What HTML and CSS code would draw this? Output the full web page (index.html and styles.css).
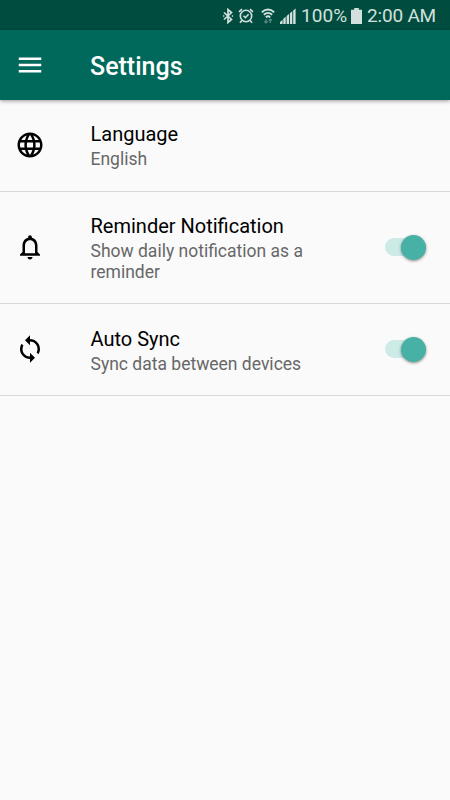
FILE: index.html
```html
<!DOCTYPE html>
<html lang="en">
<head>
    <meta charset="UTF-8">
    <meta name="viewport" content="width=device-width, initial-scale=1.0">
    <title>Settings</title>
    <link rel="stylesheet" href="styles.css">
</head>
<body>
    <!-- Status bar -->
    <div class="status-bar">
        <svg class="bluetooth" width="12" height="16" viewBox="0 0 12 16">
            <path d="M2 4.5l7.5 7L6 14.5V1.5l3.5 3L2 11.5M1 8h1.3M9.8 8h1.3" fill="none" stroke="currentColor" stroke-width="1.7"/>
        </svg>
        <svg class="alarm" width="16" height="16" viewBox="0 0 16 16">
            <g fill="none" stroke="currentColor" stroke-width="1.6">
                <circle cx="8" cy="8" r="5.7"/>
                <path d="M1 3.8L4 1.2M15 3.8L12 1.2M3.8 12.4L2 14.8M12.2 12.4L14 14.8M5.5 7.8l1.9 1.9 3.2-3.4"/>
            </g>
        </svg>
        <svg class="wifi" width="14" height="16" viewBox="0 0 14 16">
            <path d="M.8 4.2q6.2-5.4 12.4 0M2.8 6.7q4.2-3.6 8.4 0M4.8 9.2q2.2-1.8 4.4 0" fill="none" stroke="currentColor" stroke-width="1.8"/>
            <path d="M5 15v-4M3.3 13.3L5 15l1.7-1.7M9.3 11v4M7.6 12.7L9.3 11l1.7 1.7" fill="none" stroke="#5d8d84" stroke-width="1.2"/>
        </svg>
        <svg class="signal" width="16" height="16" viewBox="0 0 16 16">
            <path d="M0 16v-2l2.6-2.2V16zM3.3 16v-5.2l2.4-2v7.2zM6.6 16V8L9 6v10zM9.9 16V5.2l2.4-2V16zM13.2 16V2.4l2.4-2V16z" fill="currentColor"/>
        </svg>
        <span class="percent">100%</span>
        <svg class="battery" width="11" height="16" viewBox="0 0 11 16">
            <path d="M3.2 0h4.6v1.8H11V16H0V1.8h3.2z" fill="currentColor"/>
        </svg>
        <span class="time">2:00 AM</span>
    </div>

    <header>
        <svg class="icon" viewBox="0 0 24 24"><path d="M3 18h18v-2H3v2zm0-5h18v-2H3v2zm0-7v2h18V6H3z"/></svg>
        <h1>Settings</h1>
    </header>

    <!-- Settings list -->
    <main>
        <div class="setting">
            <svg class="icon" viewBox="0 0 24 24"><path d="M11.99 2C6.47 2 2 6.48 2 12s4.47 10 9.99 10C17.52 22 22 17.52 22 12S17.52 2 11.99 2zm6.93 6h-2.95c-.32-1.25-.78-2.45-1.38-3.56 1.84.63 3.37 1.91 4.33 3.56zM12 4.04c.83 1.2 1.48 2.53 1.91 3.96h-3.82c.43-1.43 1.08-2.76 1.91-3.96zM4.26 14C4.1 13.36 4 12.69 4 12s.1-1.36.26-2h3.38c-.08.66-.14 1.32-.14 2s.06 1.34.14 2H4.26zm.82 2h2.95c.32 1.25.78 2.45 1.38 3.56-1.84-.63-3.37-1.9-4.33-3.56zm2.95-8H5.08c.96-1.66 2.49-2.93 4.33-3.56C8.81 5.55 8.35 6.75 8.03 8zM12 19.96c-.83-1.2-1.48-2.53-1.91-3.96h3.82c-.43 1.43-1.08 2.76-1.91 3.96zM14.34 14H9.66c-.09-.66-.16-1.32-.16-2s.07-1.35.16-2h4.68c.09.65.16 1.32.16 2s-.07 1.34-.16 2zm.25 5.56c.6-1.11 1.06-2.31 1.38-3.56h2.95c-.96 1.65-2.49 2.93-4.33 3.56zM16.36 14c.08-.66.14-1.32.14-2s-.06-1.34-.14-2h3.38c.16.64.26 1.31.26 2s-.1 1.36-.26 2h-3.38z"/></svg>
            <div class="text">
                <h2>Language</h2>
                <p>English</p>
            </div>
        </div>
        <div class="setting">
            <svg class="icon" viewBox="0 0 24 24"><path d="M12 22c1.1 0 2-.9 2-2h-4c0 1.1.9 2 2 2zm6-6v-5c0-3.07-1.63-5.64-4.5-6.32V4c0-.83-.67-1.5-1.5-1.5s-1.5.67-1.5 1.5v.68C7.64 5.36 6 7.92 6 11v5l-2 2v1h16v-1l-2-2zm-2 1H8v-6c0-2.48 1.51-4.5 4-4.5s4 2.02 4 4.5v6z"/></svg>
            <div class="text">
                <h2>Reminder Notification</h2>
                <p>Show daily notification as a reminder</p>
            </div>
            <div class="switch"><div class="thumb"></div></div>
        </div>
        <div class="setting">
            <svg class="icon" viewBox="0 0 24 24"><path d="M12 4V1L8 5l4 4V6c3.31 0 6 2.69 6 6 0 1.01-.25 1.97-.7 2.8l1.46 1.46C19.54 15.03 20 13.57 20 12c0-4.42-3.58-8-8-8zm0 14c-3.31 0-6-2.69-6-6 0-1.01.25-1.97.7-2.8L5.24 7.74C4.46 8.97 4 10.43 4 12c0 4.42 3.58 8 8 8v3l4-4-4-4v3z"/></svg>
            <div class="text">
                <h2>Auto Sync</h2>
                <p>Sync data between devices</p>
            </div>
            <div class="switch"><div class="thumb"></div></div>
        </div>
    </main>
</body>
</html>
```

FILE: styles.css
```css
body {
    font-family: Roboto, sans-serif;
    margin: 0;
    background-color: #fafafa;
    color: #000;
}
.status-bar {
    display: flex;
    align-items: center;
    justify-content: flex-end;
    box-sizing: border-box;
    height: 30px;
    padding: 1px 14px 0 0;
    background-color: #004d40;
    color: #d3e0dd;
    font-size: 19px;
    line-height: 29px;
    white-space: nowrap;
}
.alarm {
    margin-left: 4px;
}
.wifi {
    margin-left: 7px;
}
.signal {
    margin-left: 5px;
}
.percent {
    margin-left: 5px;
}
.battery {
    margin-left: 4px;
}
.time {
    margin-left: 5px;
    letter-spacing: -0.2px;
}
header {
    display: flex;
    align-items: center;
    box-sizing: border-box;
    height: 70px;
    padding: 0 15px;
    background-color: #00695c;
    color: #fff;
    box-shadow: 0 1px 4px rgba(0, 0, 0, 0.4);
}
h1 {
    margin: 2px 0 0 45px;
    font-size: 25px;
    font-weight: 500;
}
.icon {
    width: 30px;
    height: 30px;
    flex-shrink: 0;
    fill: currentColor;
}
.setting {
    display: flex;
    align-items: center;
    box-sizing: border-box;
    min-height: 92.2px;
    padding: 20px 24px 21px 15px;
    border-bottom: 1px solid #d8d8d8;
}
.text {
    width: 240px;
    margin: 3px 0 0 45.5px;
}
h2 {
    margin: 0 0 3px;
    font-size: 20px;
    font-weight: 400;
    line-height: 23px;
}
p {
    margin: 0;
    color: #676767;
    font-size: 17.5px;
    line-height: 20.5px;
}
.switch {
    display: flex;
    align-items: center;
    justify-content: flex-end;
    width: 41px;
    height: 18px;
    margin-left: auto;
    border-radius: 9px;
    background-color: #cceae6;
}
.thumb {
    width: 25px;
    height: 25px;
    border-radius: 50%;
    background-color: #48b1a5;
    box-shadow: 0 1px 3px rgba(0, 0, 0, 0.45);
}
```
